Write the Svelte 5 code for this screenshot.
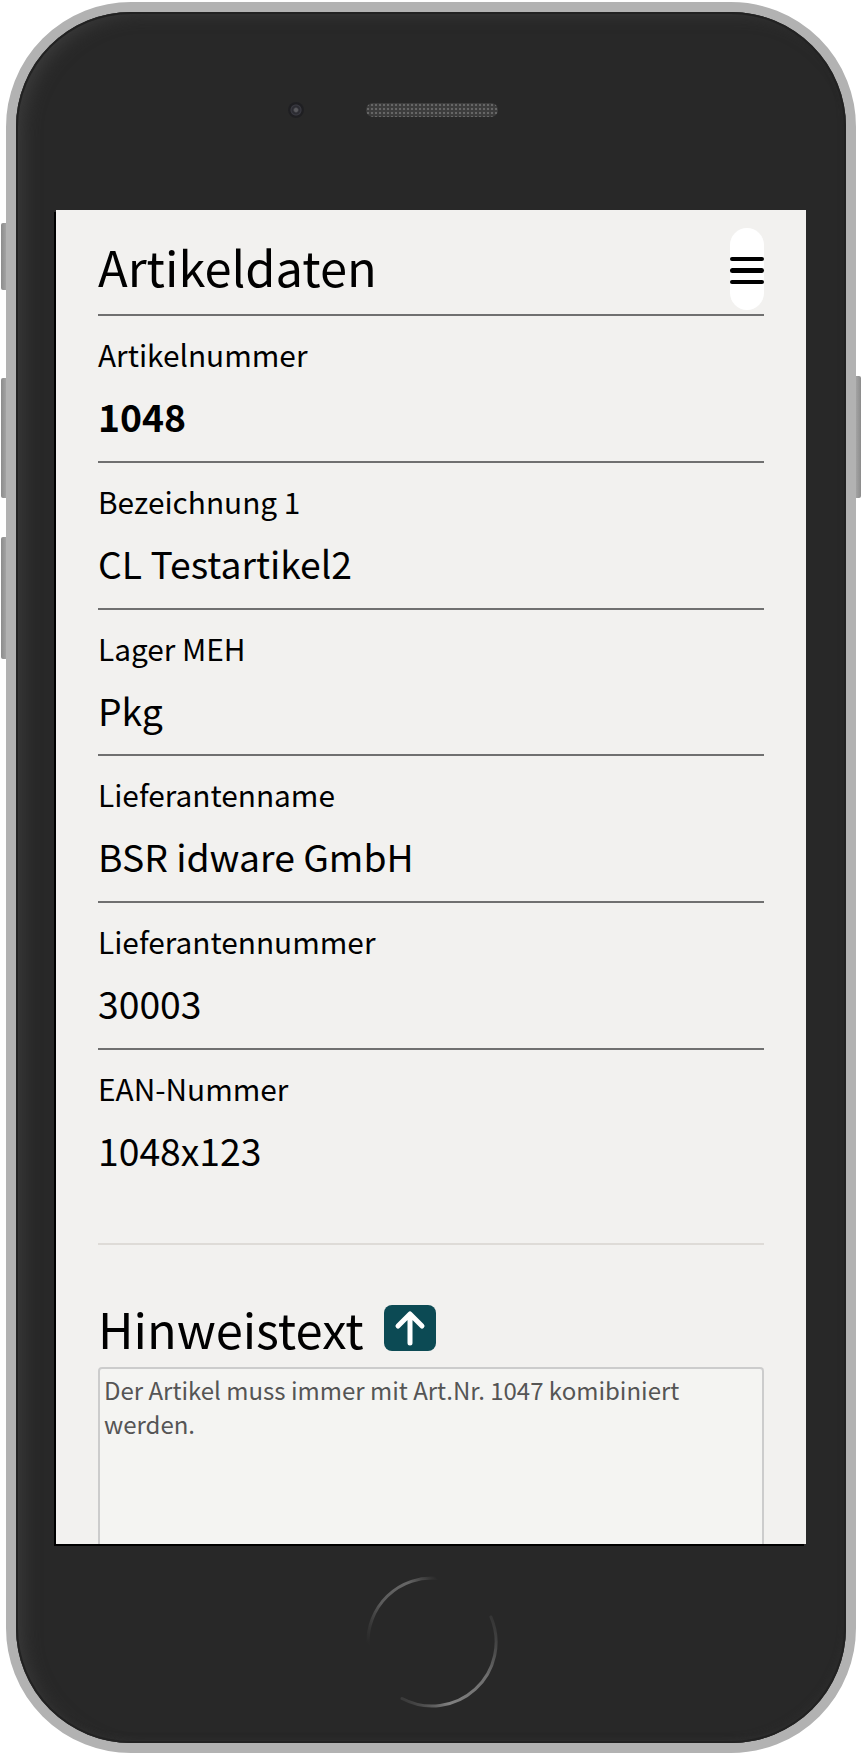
<script>
  const fields = [
    { label: 'Artikelnummer', value: '1048', bold: true },
    { label: 'Bezeichnung 1', value: 'CL Testartikel2' },
    { label: 'Lager MEH', value: 'Pkg' },
    { label: 'Lieferantenname', value: 'BSR idware GmbH' },
    { label: 'Lieferantennummer', value: '30003' },
    { label: 'EAN-Nummer', value: '1048x123' }
  ];
</script>

<div class="stage">
  <div class="side left">
    <span class="key k1"></span>
    <span class="key k2"></span>
    <span class="key k3"></span>
  </div>
  <div class="phone">
    <div class="bezel">
      <div class="top">
        <span class="camera"></span>
        <span class="speaker"></span>
      </div>
      <main class="screen">
        <header class="head">
          <h1>Artikeldaten</h1>
          <button class="toggler" aria-label="Menü"><span></span><span></span><span></span></button>
        </header>
        {#each fields as f, i}
          <div class="field" class:last={i === fields.length - 1}>
            <div class="label">{f.label}</div>
            <div class="value" class:bold={f.bold}>{f.value}</div>
          </div>
        {/each}
        <hr />
        <div class="note-head">
          <h2>Hinweistext</h2>
          <button class="up" aria-label="Hochladen">
            <svg width="32" height="36" viewBox="0 0 32 36" fill="none" stroke="#fff" stroke-width="5" stroke-linecap="round" stroke-linejoin="round">
              <path d="M16 33V5M4 16 16 4l12 12" />
            </svg>
          </button>
        </div>
        <textarea readonly>Der Artikel muss immer mit Art.Nr. 1047 komibiniert werden.</textarea>
      </main>
      <div class="bottom">
        <svg width="134" height="134" viewBox="0 0 134 134" fill="none" stroke-width="3" stroke-linecap="round">
          <defs>
            <linearGradient id="a" gradientUnits="userSpaceOnUse" x1="72" y1="3" x2="3" y2="70">
              <stop offset="0" stop-color="#666" stop-opacity="0" />
              <stop offset="0.25" stop-color="#666" />
              <stop offset="0.6" stop-color="#5c5c5c" />
              <stop offset="1" stop-color="#444" stop-opacity="0" />
            </linearGradient>
            <linearGradient id="b" gradientUnits="userSpaceOnUse" x1="126" y1="42" x2="37" y2="122">
              <stop offset="0" stop-color="#555" stop-opacity="0.3" />
              <stop offset="0.35" stop-color="#6e6e6e" />
              <stop offset="0.75" stop-color="#808080" />
              <stop offset="1" stop-color="#666" stop-opacity="0.3" />
            </linearGradient>
          </defs>
          <path stroke="url(#a)" d="M72 3.2A64 64 0 0 0 3 70" />
          <path stroke="url(#b)" d="M126 42A64 64 0 0 1 37 123.5" />
        </svg>
      </div>
    </div>
  </div>
  <div class="side right">
    <span class="key k4"></span>
  </div>
</div>

<style>
  :global(body) {
    margin: 0;
    background: #fff;
  }
  .stage {
    width: 862px;
    height: 1754px;
    display: flex;
    overflow: hidden;
  }
  .side {
    width: 6px;
    flex: none;
    position: relative;
  }
  .key {
    position: absolute;
    display: block;
    width: 5px;
    background: linear-gradient(90deg, #8c8c8c, #a3a3a3);
  }
  .left .key {
    left: 1px;
    border-radius: 2px 0 0 2px;
  }
  .right .key {
    left: 0;
    border-radius: 0 2px 2px 0;
    background: linear-gradient(90deg, #a3a3a3, #8c8c8c);
  }
  .k1 { top: 223px; height: 67px; }
  .k2 { top: 378px; height: 120px; }
  .k3 { top: 537px; height: 122px; }
  .k4 { top: 376px; height: 122px; }
  .phone {
    width: 850px;
    height: 1751px;
    margin-top: 2px;
    box-sizing: border-box;
    border: 10px solid #b2b2b2;
    border-radius: 125px;
    background: #282828;
    flex: none;
  }
  .bezel {
    height: 100%;
    box-sizing: border-box;
    border-radius: 115px;
    padding: 0 40px;
    display: flex;
    flex-direction: column;
    align-items: stretch;
    box-shadow:
      inset 0 0 0 2px #222,
      inset 12px 6px 18px -6px #3c3c3c,
      inset -4px -6px 10px -6px #333;
  }
  .top {
    height: 198px;
    flex: none;
    display: flex;
    align-items: flex-start;
    padding: 89px 0 0 232px;
    box-sizing: border-box;
  }
  .camera {
    width: 16px;
    height: 16px;
    margin-top: 1px;
    border-radius: 50%;
    background: radial-gradient(circle, #5a5a5e 0 1.5px, #2c2c32 3px 4px, #3a3a42 5px, #1f1f22 6px 8px);
  }
  .speaker {
    width: 132px;
    height: 14px;
    margin: 2px 0 0 62px;
    border-radius: 7px;
    background-color: #3c3c3c;
    background-image: radial-gradient(circle, #666 1px, transparent 1.6px);
    background-size: 4px 4px;
  }
  .screen {
    height: 1334px;
    flex: none;
    box-sizing: border-box;
    padding: 0 42px;
    background: #f2f1ef;
    box-shadow: -2px 2px 0 #000;
    overflow: hidden;
    font-family: "Noto Sans CJK JP", "Noto Sans", sans-serif;
    color: #000;
  }
  .head {
    height: 106px;
    box-sizing: border-box;
    display: flex;
    justify-content: space-between;
    align-items: flex-start;
    border-bottom: 2px solid #707070;
  }
  h1 {
    margin: 20px 0 0;
    font-size: 48.8px;
    line-height: 72px;
    font-weight: 400;
  }
  .toggler {
    width: 34px;
    height: 82px;
    margin-top: 18px;
    padding: 3px 0 0;
    border: 0;
    border-radius: 17px;
    background: #fff;
    display: flex;
    flex-direction: column;
    justify-content: center;
    gap: 7px;
  }
  .toggler span {
    display: block;
    height: 4.5px;
    border-radius: 3px;
    background: #000;
  }
  .field {
    height: 146.8px;
    box-sizing: border-box;
    padding-top: 18px;
    border-bottom: 2px solid #707070;
  }
  .field.last {
    border-bottom: 0;
  }
  .label {
    font-size: 29.8px;
    line-height: 40px;
  }
  .value {
    margin-top: 15px;
    font-size: 37.3px;
    line-height: 54px;
  }
  .bold {
    font-weight: 700;
  }
  hr {
    margin: 46px 0 0;
    border: 0;
    border-top: 2px solid #dedbd7;
  }
  .note-head {
    display: flex;
    align-items: center;
    gap: 20px;
    height: 122px;
    box-sizing: border-box;
    padding-top: 44px;
  }
  h2 {
    margin: 0;
    font-size: 48.8px;
    line-height: 72px;
    font-weight: 400;
  }
  .up {
    width: 52px;
    height: 46px;
    padding: 0;
    border: 0;
    border-radius: 8px;
    background: #0c4a54;
    display: flex;
    align-items: center;
    justify-content: center;
  }
  textarea {
    display: block;
    width: 100%;
    height: 300px;
    box-sizing: border-box;
    padding: 4px;
    border: 2px solid #ccc;
    border-radius: 4px;
    background: #f4f4f2;
    color: #555;
    font: 400 24px/34px "Noto Sans CJK JP", "Noto Sans", sans-serif;
    outline: 0;
    resize: none;
  }
  .bottom {
    flex: 1;
    display: flex;
    justify-content: center;
    padding: 31px 0 0 1px;
    box-sizing: border-box;
  }
</style>
